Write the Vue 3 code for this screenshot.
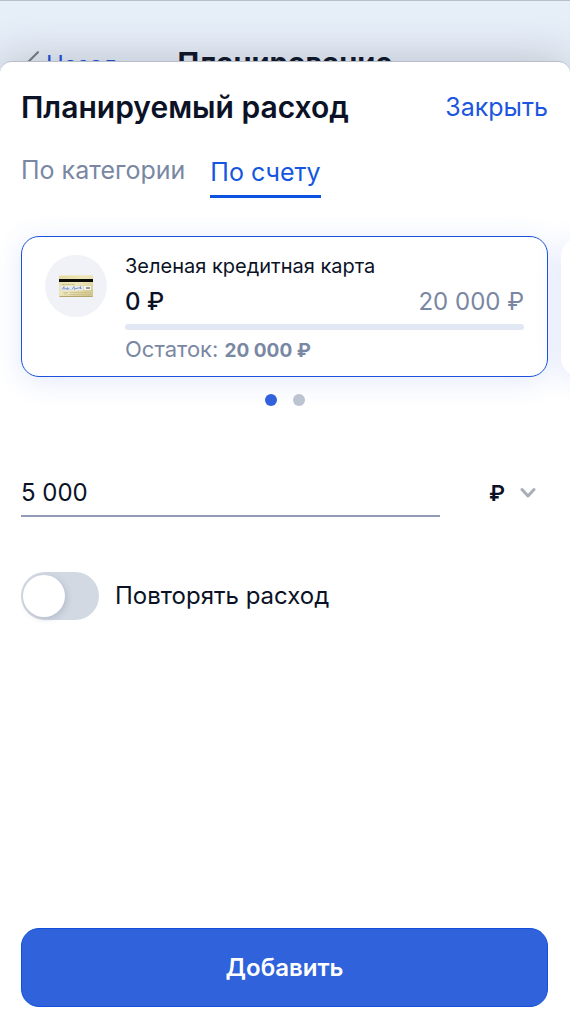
<script setup>
import { ref } from 'vue'

const tabs = [
  { id: 'category', label: 'По категории' },
  { id: 'account', label: 'По счету' },
]
const activeTab = ref('account')
const activeSlide = ref(0)
const amount = ref('5 000')
const currency = ref('₽')
const repeat = ref(false)
const spentPercent = ref(0)
</script>

<template>
  <div class="page">
    <header class="topbar">
      <a class="back" href="#">
        <svg class="back-icon" viewBox="0 0 16 28" aria-hidden="true">
          <path d="M15 2 2 15l13 12" />
        </svg>
        Назад
      </a>
      <h2 class="topbar-title">Планирование</h2>
    </header>

    <main class="sheet">
      <div class="sheet-head">
        <h1 class="title">Планируемый расход</h1>
        <button class="close" type="button">Закрыть</button>
      </div>

      <nav class="tabs">
        <button
          v-for="tab in tabs"
          :key="tab.id"
          type="button"
          class="tab"
          :class="{ active: activeTab === tab.id }"
          @click="activeTab = tab.id"
        >{{ tab.label }}</button>
      </nav>

      <section class="carousel">
        <article class="card selected">
          <div class="avatar">
            <svg class="card-icon" viewBox="0 0 34 22" aria-hidden="true">
              <defs>
                <linearGradient id="gold" x1="0" y1="0" x2="1" y2="1">
                  <stop offset="0" stop-color="#e3d8a0" />
                  <stop offset="0.45" stop-color="#eee6bd" />
                  <stop offset="1" stop-color="#cfc184" />
                </linearGradient>
              </defs>
              <rect width="34" height="22" rx="1.5" fill="url(#gold)" />
              <rect width="34" height="1" rx="0.5" fill="#f1e9c6" />
              <rect y="4" width="34" height="3" fill="#0b0b08" />
              <path d="M3 9.500h13" stroke="#b3a877" stroke-width="0.7" stroke-dasharray="2 0.5" />
              <rect x="2" y="11" width="22" height="4.5" fill="#e7ebec" />
              <rect x="25" y="11" width="7" height="4" fill="#f5f4ec" />
              <path d="M27 13h4" stroke="#55565c" stroke-width="1.2" />
              <path d="M3 14.500 5 11.500v3l1.500-1.500 1 1.500 1-2v2l1.500-1 1 1m2 0 2-3 .5 3 1.500-1.500 1 1 1-1.500 1 1 1.500-2v2.500l1-1" fill="none" stroke="#6e86c9" stroke-width="0.8" />
              <path d="M4 17.500h5M5 19h3M11 17.500h20M11 19.500h20" stroke="#c4b888" stroke-width="0.6" />
              <path d="M0.500 21.500h33" stroke="#b3a66d" stroke-width="1" />
            </svg>
          </div>
          <div class="card-body">
            <div class="card-name">Зеленая кредитная карта</div>
            <div class="card-sums">
              <span class="spent">0 ₽</span>
              <span class="limit">20 000 ₽</span>
            </div>
            <div class="bar"><div class="bar-fill" :style="{ width: spentPercent + '%' }"></div></div>
            <div class="rest">Остаток: <b>20 000 ₽</b></div>
          </div>
        </article>
        <article class="card next"></article>
      </section>

      <div class="dots">
        <button
          v-for="n in 2"
          :key="n"
          type="button"
          class="dot"
          :class="{ active: activeSlide === n - 1 }"
          :aria-label="'Счет ' + n"
          @click="activeSlide = n - 1"
        ></button>
      </div>

      <form class="form" @submit.prevent>
        <div class="amount-row">
          <input v-model="amount" class="amount" type="text" inputmode="numeric" aria-label="Сумма" />
          <div class="currency">
            <select v-model="currency" class="currency-select" aria-label="Валюта">
              <option>₽</option>
            </select>
            <svg class="chevron" viewBox="0 0 16 12" aria-hidden="true">
              <path d="M2 2.500 8 9l6-6.500" />
            </svg>
          </div>
        </div>

        <label class="repeat">
          <input v-model="repeat" class="switch" type="checkbox" />
          Повторять расход
        </label>

        <button class="submit" type="submit">Добавить</button>
      </form>
    </main>
  </div>
</template>

<style>
body {
  margin: 0;
  background: #fff;
}
</style>

<style scoped>
.page {
  display: flex;
  flex-direction: column;
  min-height: 100vh;
  box-sizing: border-box;
  border-top: 1px solid #b8c0cd;
  background: #fff;
  color: #0b1226;
  font-family: Inter, "Open Sans", sans-serif;
  font-size: 24px;
  line-height: 32px;
}

button,
input,
select {
  font: inherit;
  color: inherit;
  margin: 0;
  padding: 0;
  border: 0;
  background: none;
}

button {
  cursor: pointer;
}

.topbar {
  display: grid;
  grid-template-columns: 1fr auto 1fr;
  align-items: center;
  height: 84px;
  padding: 44px 22px 6px;
  box-sizing: border-box;
  background: #e6eef8;
}

.back {
  display: flex;
  align-items: center;
  gap: 7px;
  padding-top: 4px;
  color: #1c4fdc;
  text-decoration: none;
}

.back-icon {
  width: 17px;
  height: 30px;
  fill: none;
  stroke: #777b82;
  stroke-width: 2;
  stroke-linecap: round;
}

.topbar-title {
  margin: 0;
  font-size: 29px;
  font-weight: 700;
}

.sheet {
  position: relative;
  display: flex;
  flex: 1;
  flex-direction: column;
  margin-top: -24px;
  padding: 25px 0 11px;
  border-top: 1px solid #b8bec8;
  border-radius: 12px 12px 0 0;
  background: #fff;
  box-shadow: 0 0 44px rgba(60, 65, 80, 0.28);
}

.sheet-head {
  display: flex;
  align-items: center;
  justify-content: space-between;
  padding: 0 22px 0 21px;
}

.title {
  margin: 0;
  font-size: 30px;
  line-height: 40px;
  font-weight: 600;
}

.close {
  color: #1c56e0;
  font-size: 25px;
}

.tabs {
  display: flex;
  align-items: flex-start;
  gap: 25px;
  margin-top: 27px;
  padding: 0 21px;
  font-size: 25px;
}

.tab {
  color: #7a87a3;
}

.tab.active {
  padding: 2px 0 7px;
  border-bottom: 3px solid #0b52e0;
  color: #1456e0;
}

.carousel {
  display: flex;
  align-items: center;
  gap: 13px;
  margin-bottom: -32px;
  padding: 38px 22px 49px 21px;
  overflow: hidden;
}

.card {
  display: flex;
  flex: 0 0 100%;
  gap: 18px;
  box-sizing: border-box;
  padding: 13px 23px 10px;
  border: 1px solid transparent;
  border-radius: 18px;
  background: #fff;
  box-shadow: 0 4px 28px rgba(60, 100, 225, 0.14);
}

.card.selected {
  border-color: #1c52dc;
}

.card.next {
  height: 138px;
}

.avatar {
  display: flex;
  flex: none;
  align-items: center;
  justify-content: center;
  width: 62px;
  height: 62px;
  margin-top: 5px;
  border-radius: 50%;
  background: #f0f2f7;
}

.card-icon {
  width: 34px;
  height: 22px;
}

.card-body {
  flex: 1;
  min-width: 0;
}

.card-name {
  font-size: 20px;
}

.card-sums {
  display: flex;
  justify-content: space-between;
  line-height: 40px;
}

.spent {
  font-weight: 500;
}

.limit,
.rest {
  color: #7a87a3;
}

.bar {
  height: 6px;
  margin: 2px 0 4px;
  overflow: hidden;
  border-radius: 3px;
  background: #e1e8f4;
}

.bar-fill {
  height: 100%;
  background: #2f62db;
}

.rest {
  font-size: 22px;
  line-height: 30px;
}

.rest b {
  font-size: 19px;
  font-weight: 700;
}

.dots {
  position: relative;
  display: flex;
  justify-content: center;
  gap: 16px;
}

.dot {
  width: 12px;
  height: 12px;
  border-radius: 50%;
  background: #bcc3d1;
}

.dot.active {
  background: #2f62db;
}

.form {
  display: flex;
  flex: 1;
  flex-direction: column;
  padding: 68px 22px 0 21px;
}

.amount-row {
  display: flex;
  gap: 48px;
}

.amount {
  flex: 1;
  min-width: 0;
  height: 43px;
  padding-bottom: 4px;
  box-sizing: border-box;
  border-bottom: 2px solid #929cb8;
  border-radius: 0;
  outline: none;
}

.currency {
  display: grid;
  align-items: center;
  width: 60px;
  height: 37px;
}

.currency-select {
  grid-area: 1 / 1;
  appearance: none;
  width: 100%;
  padding-left: 1px;
  font-size: 22px;
  font-weight: 600;
  cursor: pointer;
}

.chevron {
  grid-area: 1 / 1;
  justify-self: end;
  width: 16px;
  height: 12px;
  margin-right: 12px;
  fill: none;
  stroke: #a9adb8;
  stroke-width: 3;
  stroke-linecap: round;
  stroke-linejoin: round;
  pointer-events: none;
}

.repeat {
  display: flex;
  align-items: center;
  gap: 16px;
  margin: 55px 0 32px;
}

.switch {
  appearance: none;
  display: flex;
  align-items: center;
  flex: none;
  width: 78px;
  height: 48px;
  padding: 0 2px;
  box-sizing: border-box;
  border-radius: 24px;
  background: #d2d9e3;
}

.switch::before {
  content: "";
  width: 42px;
  height: 42px;
  border-radius: 50%;
  background: #fff;
  box-shadow: 2px 2px 6px rgba(70, 85, 115, 0.2);
}

.switch:checked {
  justify-content: flex-end;
  background: #2f62db;
}

.submit {
  height: 79px;
  margin-top: auto;
  border: 1px solid #1250dc;
  border-radius: 18px;
  background: #2f62db;
  color: #fff;
  font-weight: 600;
}
</style>
